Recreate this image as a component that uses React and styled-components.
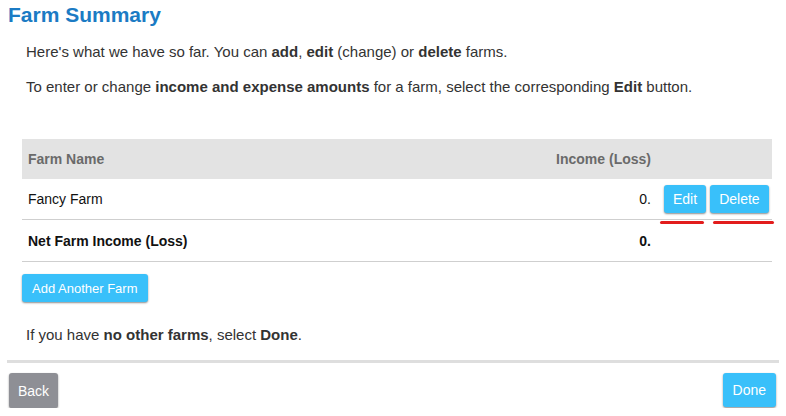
import React from "react";
import styled, { createGlobalStyle } from "styled-components";

const Global = createGlobalStyle`
  html, body { margin: 0; padding: 0; background: #fff; }
  body { font-family: "Liberation Sans", Arial, sans-serif; color: #333; }
  * { box-sizing: border-box; }
`;

const Page = styled.div`
  width: 786px;
  padding: 0 7px;
`;

const Title = styled.h1`
  margin: 0;
  padding-left: 1px;
  font-size: 21px;
  line-height: 30px;
  font-weight: 700;
  color: #1b7bc4;
`;

const Content = styled.div`
  padding: 0 7px 0 15px;
`;

const Para = styled.p`
  margin: ${(p) => p.$top}px 0 0 4px;
  font-size: 15px;
  line-height: 20px;
  color: #333;
  b { font-weight: 700; }
`;

const Table = styled.div`
  margin-top: 42px;
`;

const Row = styled.div`
  display: grid;
  grid-template-columns: 1fr 121px;
  align-items: center;
  min-height: ${(p) => p.$h}px;
  background: ${(p) => (p.$head ? "#e3e3e3" : "#fff")};
  border-bottom: ${(p) => (p.$head ? "none" : "1px solid #cfcfcf")};
  font-size: 14px;
  font-weight: ${(p) => (p.$bold ? 700 : 400)};
  color: ${(p) => (p.$head ? "#6a6a6a" : "#111")};
`;

const NameCell = styled.div`
  display: flex;
  justify-content: space-between;
  padding-left: 6px;
`;

const Amount = styled.span``;

const Actions = styled.div`
  display: flex;
  gap: 4px;
  padding-left: 13px;
`;

const Btn = styled.button`
  height: ${(p) => p.$h || 28}px;
  padding: 0 ${(p) => p.$px || 9}px;
  border: none;
  border-radius: 3px;
  background: ${(p) => (p.$gray ? "#8e8f95" : "#39c0fa")};
  color: #fff;
  font-family: "Liberation Sans", Arial, sans-serif;
  font-size: ${(p) => p.$fs || 14}px;
  box-shadow: 0 1px 2px rgba(0, 0, 0, 0.45);
  cursor: pointer;
`;

const Marked = styled.span`
  position: relative;
  display: inline-flex;
`;

const Mark = styled.span`
  position: absolute;
  top: 36px;
  left: ${(p) => p.$left}px;
  width: ${(p) => p.$w}px;
  height: 3px;
  border-radius: 2px;
  background: #e21c1c;
`;

const AddWrap = styled.div`
  margin-top: 12px;
`;

const Divider = styled.hr`
  margin: 15px 0 0;
  border: none;
  height: 3px;
  background: #dedede;
  width: 772px;
`;

const Footer = styled.div`
  display: flex;
  justify-content: space-between;
  padding: 10px 3px 0 2px;
  width: 772px;
`;

export default function App() {
  return (
    <>
      <Global />
      <Page>
        <Title>Farm Summary</Title>
        <Content>
          <Para $top={12}>
            Here's what we have so far. You can <b>add</b>, <b>edit</b> (change) or <b>delete</b> farms.
          </Para>
          <Para $top={15}>
            To enter or change <b>income and expense amounts</b> for a farm, select the corresponding <b>Edit</b> button.
          </Para>
          <Table>
            <Row $head $bold $h={40}>
              <NameCell>
                <span>Farm Name</span>
                <Amount>Income (Loss)</Amount>
              </NameCell>
              <div />
            </Row>
            <Row $h={41}>
              <NameCell>
                <span>Fancy Farm</span>
                <Amount>0.</Amount>
              </NameCell>
              <Actions>
                <Marked>
                  <Btn>Edit</Btn>
                  <Mark $left={-4} $w={44} />
                </Marked>
                <Marked>
                  <Btn>Delete</Btn>
                  <Mark $left={3} $w={61} />
                </Marked>
              </Actions>
            </Row>
            <Row $bold $h={42}>
              <NameCell>
                <span>Net Farm Income (Loss)</span>
                <Amount>0.</Amount>
              </NameCell>
              <div />
            </Row>
          </Table>
          <AddWrap>
            <Btn $fs={13} $px={10}>Add Another Farm</Btn>
          </AddWrap>
          <Para $top={23}>
            If you have <b>no other farms</b>, select <b>Done</b>.
          </Para>
        </Content>
        <Divider />
        <Footer>
          <Btn $gray $h={35}>Back</Btn>
          <Btn $h={34} $px={10}>Done</Btn>
        </Footer>
      </Page>
    </>
  );
}
